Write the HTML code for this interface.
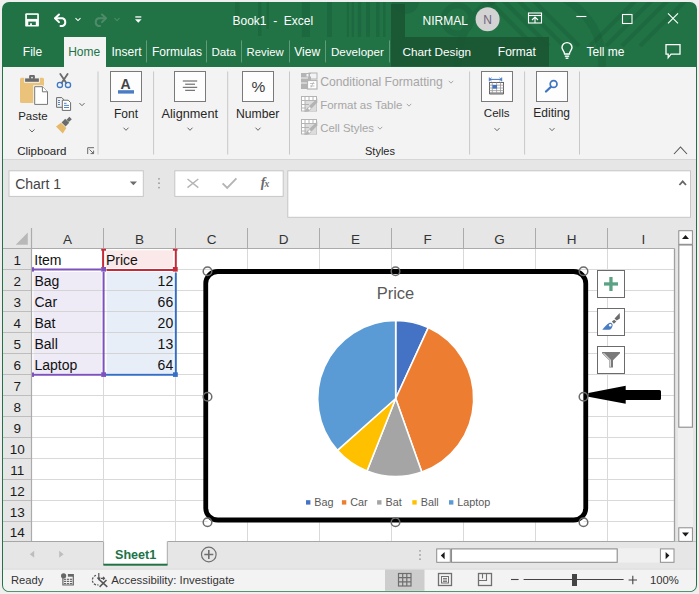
<!DOCTYPE html>
<html><head><meta charset="utf-8"><style>
html,body{margin:0;padding:0;}
body{width:699px;height:594px;overflow:hidden;background:#efefef;position:relative;font-family:"Liberation Sans", sans-serif;}
svg{position:absolute;left:0;top:0;}
</style></head><body>
<svg width="699" height="594" viewBox="0 0 699 594" font-family='"Liberation Sans", sans-serif'>
<rect x="2" y="2" width="695" height="590" fill="#217346" rx="7"/>
<defs><clipPath id="tb"><rect x="2" y="2" width="695" height="65" rx="7"/></clipPath></defs>
<g clip-path="url(#tb)">
<g opacity="0.13" fill="#082e18"><rect x="235" y="2" width="4.5" height="25"/><rect x="258" y="2" width="3.5" height="34"/><rect x="266.5" y="2" width="2.5" height="27"/><rect x="301.7" y="2" width="8.3" height="35"/><rect x="327" y="2" width="5" height="35"/><rect x="346.7" y="2" width="2.3" height="35"/><rect x="351.6" y="2" width="2.4" height="35"/><rect x="357.7" y="2" width="3.6" height="35"/><rect x="366" y="2" width="4" height="35"/><rect x="376" y="2" width="3.6" height="35"/><rect x="383" y="2" width="2.6" height="35"/></g>
<g opacity="0.12" fill="none" stroke="#082e18"><circle cx="457.5" cy="19.5" r="14" stroke-width="6"/><circle cx="530" cy="62" r="72" stroke-width="8"/><circle cx="405.7" cy="0" r="14" stroke-width="0" fill="#082e18"/></g>
<g opacity="0.12" stroke="#082e18" stroke-width="4.5"><line x1="636" y1="0" x2="590" y2="46"/><line x1="652" y1="0" x2="606" y2="46"/><line x1="668" y1="0" x2="622" y2="46"/><line x1="686" y1="0" x2="640" y2="46"/><line x1="488" y1="0" x2="534" y2="46"/><line x1="503" y1="0" x2="549" y2="46"/><line x1="518" y1="0" x2="564" y2="46"/><line x1="533" y1="0" x2="579" y2="46"/></g>
</g>
<path d="M391 4 H405 V37 H549 V66.6 H391 Z" fill="#1a5733" opacity="0.92"/>
<rect x="3" y="67" width="693" height="92" fill="#f3f3f3" />
<rect x="3" y="159" width="693" height="1" fill="#d6d6d6" />
<rect x="3" y="160" width="693" height="89" fill="#e6e6e6" />
<rect x="32" y="249" width="642.5" height="292.5" fill="#ffffff" />
<rect x="3" y="249" width="28.5" height="292.5" fill="#e6e6e6" />
<rect x="674.5" y="228" width="21.5" height="313.5" fill="#e6e6e6" />
<rect x="3" y="541.5" width="693" height="27.5" fill="#e6e6e6" />
<path d="M3 569 H696 V585.3 A6 6 0 0 1 690 591.3 H9 A6 6 0 0 1 3 585.3 Z" fill="#f3f3f3"/>
<rect x="25.2" y="13.2" width="13.7" height="13.4" rx="1.2" fill="#fff"/><rect x="26.9" y="14.9" width="10.3" height="4" fill="#217346"/><rect x="28.3" y="21.6" width="7.5" height="3.4" fill="#217346"/><rect x="30.1" y="23.3" width="1.8" height="1.8" fill="#fff"/>
<g fill="none" stroke="#fff" stroke-width="2" stroke-linecap="round" stroke-linejoin="round"><path d="M55.5 18.3 H62.6 A4.1 4.1 0 0 1 62.6 26 H60.5"/><path d="M59 14.5 L55 18.3 L59 22.1"/></g><path d="M75.5 18.2 L78 20.6 L80.5 18.2" fill="none" stroke="#fff" stroke-width="1.1"/>
<g fill="none" stroke="#4f8b6a" stroke-width="2" stroke-linecap="round" stroke-linejoin="round"><path d="M105.5 18.3 H98.4 A4.1 4.1 0 0 0 98.4 26 H100"/><path d="M102 14.5 L106 18.3 L102 22.1"/></g><path d="M114.5 18.2 L117 20.6 L119.5 18.2" fill="none" stroke="#4f8b6a" stroke-width="1.1"/>
<rect x="135.3" y="16.3" width="6" height="1.3" fill="#fff"/><path d="M135 19.2 H141.6 L138.3 22.8 Z" fill="#fff"/>
<text x="232.50" y="25.00" font-size="12" fill="#ffffff" font-weight="400" >Book1  -  Excel</text>
<text x="422.60" y="25.00" font-size="12" fill="#ffffff" font-weight="400" >NIRMAL</text>
<circle cx="487.6" cy="19.3" r="12" fill="#d3d3d3"/>
<text x="483.20" y="24.00" font-size="12" fill="#6e6480" font-weight="400" >N</text>
<g fill="none" stroke="#fff" stroke-width="1.1"><rect x="528.5" y="13" width="13" height="10"/><line x1="528.5" y1="15.5" x2="541.5" y2="15.5"/><path d="M532 20 L535 17 L538 20 M535 17 V23"/></g>
<g stroke="#fff" stroke-width="1.1" fill="none"><line x1="576.3" y1="16.5" x2="586.4" y2="16.5"/><rect x="622.5" y="14.5" width="9.5" height="9"/><path d="M668 13.3 L678 23.3 M678 13.3 L668 23.3"/></g>
<rect x="64" y="37" width="42" height="30" fill="#f3f3f3" />
<text x="22.80" y="55.80" font-size="12" fill="#ffffff" font-weight="400" >File</text>
<text x="68.20" y="55.80" font-size="12" fill="#217346" font-weight="400" >Home</text>
<text x="111.50" y="55.80" font-size="12" fill="#ffffff" font-weight="400" >Insert</text>
<text x="152.00" y="55.80" font-size="12" fill="#ffffff" font-weight="400" >Formulas</text>
<text x="211.50" y="55.80" font-size="11.6" fill="#ffffff" font-weight="400" >Data</text>
<text x="246.60" y="55.80" font-size="11.3" fill="#ffffff" font-weight="400" >Review</text>
<text x="294.30" y="55.80" font-size="12" fill="#ffffff" font-weight="400" >View</text>
<text x="331.00" y="55.80" font-size="11.6" fill="#ffffff" font-weight="400" >Developer</text>
<text x="402.50" y="55.80" font-size="11.75" fill="#ffffff" font-weight="400" >Chart Design</text>
<text x="497.80" y="55.80" font-size="12" fill="#ffffff" font-weight="400" >Format</text>
<text x="586.50" y="55.80" font-size="12" fill="#ffffff" font-weight="400" >Tell me</text>
<rect x="146" y="40.4" width="1" height="22" fill="#5f9c7a"/>
<rect x="206" y="40.4" width="1" height="22" fill="#5f9c7a"/>
<rect x="241" y="40.4" width="1" height="22" fill="#5f9c7a"/>
<rect x="289" y="40.4" width="1" height="22" fill="#5f9c7a"/>
<rect x="325" y="40.4" width="1" height="22" fill="#5f9c7a"/>
<rect x="389" y="40.4" width="1" height="22" fill="#5f9c7a"/>
<g fill="none" stroke="#fff" stroke-width="1.4"><path d="M564.6 54 C564.6 51.2 562 50 562 47.6 A5 5 0 0 1 572 47.6 C572 50 569.4 51.2 569.4 54 Z"/><line x1="564.8" y1="56.2" x2="569.2" y2="56.2"/><line x1="565.6" y1="58.2" x2="568.4" y2="58.2"/></g>
<path d="M666 44.6 H680 V54.2 H671 L668.2 57.6 V54.2 H666 Z" fill="none" stroke="#fff" stroke-width="1.3" stroke-linejoin="miter"/>
<rect x="97.5" y="71.5" width="1" height="83" fill="#c8c8c8" />
<rect x="153.1" y="71.5" width="1" height="83" fill="#c8c8c8" />
<rect x="227.2" y="71.5" width="1" height="83" fill="#c8c8c8" />
<rect x="289.0" y="71.5" width="1" height="83" fill="#c8c8c8" />
<rect x="469.1" y="71.5" width="1" height="83" fill="#c8c8c8" />
<rect x="524.1" y="71.5" width="1" height="83" fill="#c8c8c8" />
<rect x="579.0" y="71.5" width="1" height="83" fill="#c8c8c8" />
<rect x="20" y="77.7" width="24" height="25.3" rx="1.5" fill="#eac27a"/><path d="M24.2 77.2 H39.8 V82.8 H24.2 Z" fill="#f3f3f3"/><path d="M25.1 78.4 H38.9 V81.8 H25.1 Z" fill="#6a6a6a"/><rect x="29.1" y="75" width="5.8" height="4" rx="1" fill="#6a6a6a"/><circle cx="32" cy="77.6" r="0.9" fill="#f3f3f3"/><path d="M33.2 85.2 H43 L49 91.2 V106 H33.2 Z" fill="#f3f3f3"/><path d="M34.7 86.7 H42.4 L47.5 91.8 V104.4 H34.7 Z" fill="#fff" stroke="#777" stroke-width="1"/><path d="M42.4 86.7 V91.8 H47.5" fill="#fff" stroke="#777" stroke-width="1"/>
<text x="18.20" y="120.00" font-size="11.5" fill="#262626" font-weight="400" >Paste</text>
<path d="M29.50 129.40 L32.00 132.00 L34.50 129.40" fill="none" stroke="#666" stroke-width="1"/>
<g fill="none" stroke="#6b6b6b" stroke-width="1.8" stroke-linecap="round"><path d="M60.3 74 L66.3 83"/><path d="M67.6 74 L61.6 83"/></g><g fill="none" stroke="#3e78c2" stroke-width="1.3"><circle cx="59.9" cy="84.9" r="2.6"/><circle cx="68" cy="84.9" r="2.6"/></g>
<path d="M56.6 97.6 H61.8 L63.5 99.3 V107.3 H56.6 Z" fill="#f3f3f3" stroke="#6b6b6b" stroke-width="1"/><g stroke="#3e78c2" stroke-width="0.9"><line x1="58" y1="100.5" x2="60" y2="100.5"/><line x1="58" y1="102.5" x2="60" y2="102.5"/><line x1="58" y1="104.5" x2="60" y2="104.5"/></g><path d="M62.3 100.2 H68.2 L70.6 102.6 V110.4 H62.3 Z" fill="#fff" stroke="#6b6b6b" stroke-width="1"/><g stroke="#3e78c2" stroke-width="0.9"><line x1="64" y1="103.3" x2="66.5" y2="103.3"/><line x1="64" y1="105.4" x2="69" y2="105.4"/><line x1="64" y1="107.5" x2="69" y2="107.5"/></g>
<path d="M79.50 103.10 L82.00 105.70 L84.50 103.10" fill="none" stroke="#666" stroke-width="1"/>
<path d="M56 126.6 L61 122.8 L66.3 128.1 L62.8 133.4 Z" fill="#e6b86a"/><path d="M61.6 122.4 L65.2 118.8 L69.2 122.8 L65.6 126.4 Z" fill="#6b6b6b"/><path d="M66.5 119.7 L69.4 116.8 L71.8 119.2 L68.9 122.1 Z" fill="#6b6b6b"/>
<text x="17.20" y="154.70" font-size="11.5" fill="#262626" font-weight="400" >Clipboard</text>
<g fill="none" stroke="#6b6b6b" stroke-width="1"><path d="M87.7 154 V147.7 H94 "/><path d="M89.5 149.5 L93.6 153.6 M93.6 150.6 V153.6 H90.6"/></g>
<rect x="110.5" y="71.5" width="31" height="30" fill="#fdfdfd" stroke="#7a7a7a" stroke-width="1"/>
<text x="120.60" y="88.60" font-size="14" fill="#444" font-weight="700" >A</text>
<rect x="118" y="90.2" width="16" height="3.4" fill="#4a7cc4" />
<text x="114.00" y="117.70" font-size="12" fill="#262626" font-weight="400" >Font</text>
<path d="M123.50 127.70 L126.00 130.30 L128.50 127.70" fill="none" stroke="#666" stroke-width="1"/>
<rect x="174.5" y="71.5" width="31" height="30" fill="#fdfdfd" stroke="#7a7a7a" stroke-width="1"/>
<g stroke="#555" stroke-width="1"><line x1="182.8" y1="81" x2="197.2" y2="81"/><line x1="185.2" y1="84.2" x2="195" y2="84.2"/><line x1="182.8" y1="87.3" x2="197.2" y2="87.3"/><line x1="185.2" y1="90.3" x2="195" y2="90.3"/></g>
<text x="161.60" y="118.00" font-size="12.7" fill="#262626" font-weight="400" >Alignment</text>
<path d="M187.50 127.70 L190.00 130.30 L192.50 127.70" fill="none" stroke="#666" stroke-width="1"/>
<rect x="242.5" y="71.5" width="31" height="30" fill="#fdfdfd" stroke="#7a7a7a" stroke-width="1"/>
<text x="251.60" y="92.40" font-size="15.5" fill="#3a3a3a" font-weight="400" >%</text>
<text x="236.00" y="118.00" font-size="12.2" fill="#262626" font-weight="400" >Number</text>
<path d="M255.50 127.70 L258.00 130.30 L260.50 127.70" fill="none" stroke="#666" stroke-width="1"/>
<text x="320.20" y="85.60" font-size="12.2" fill="#a6a6a6" font-weight="400" >Conditional Formatting</text>
<path d="M448.75 80.85 L451.00 83.15 L453.25 80.85" fill="none" stroke="#a6a6a6" stroke-width="1"/>
<text x="320.20" y="108.80" font-size="11.5" fill="#a6a6a6" font-weight="400" >Format as Table</text>
<path d="M406.75 103.85 L409.00 106.15 L411.25 103.85" fill="none" stroke="#a6a6a6" stroke-width="1"/>
<text x="320.20" y="131.70" font-size="11.4" fill="#a6a6a6" font-weight="400" >Cell Styles</text>
<path d="M377.75 126.85 L380.00 129.15 L382.25 126.85" fill="none" stroke="#a6a6a6" stroke-width="1"/>
<text x="365.00" y="154.80" font-size="11" fill="#262626" font-weight="400" >Styles</text>
<g fill="#b4b4b4"><rect x="301" y="73" width="10" height="16"/></g><g fill="#f3f3f3"><rect x="306.5" y="74" width="2.5" height="2.5"/><rect x="310" y="74" width="2.5" height="2.5"/><rect x="313.5" y="74" width="2.5" height="2.5"/></g><rect x="309" y="73" width="8" height="6" fill="none" stroke="#b4b4b4" stroke-width="1"/><line x1="301" y1="78" x2="308" y2="78" stroke="#f3f3f3" stroke-width="1"/><line x1="301" y1="83" x2="308" y2="83" stroke="#f3f3f3" stroke-width="1"/><rect x="307.5" y="80.5" width="9.5" height="8.5" fill="#fff" stroke="#b4b4b4" stroke-width="1.2"/><path d="M310 83.5 H314.5 M310 86 H314.5 M313.5 82 L311 87.5" stroke="#b4b4b4" stroke-width="0.8"/>
<rect x="301.5" y="96.5" width="15" height="14.5" fill="#fff" stroke="#b4b4b4" stroke-width="1"/><rect x="305" y="100" width="11.5" height="10.5" fill="#dcdcdc"/><g stroke="#b4b4b4" stroke-width="1"><line x1="301" y1="100.5" x2="317" y2="100.5"/><line x1="301" y1="104.5" x2="309" y2="104.5"/><line x1="301" y1="108" x2="306" y2="108"/><line x1="305" y1="96" x2="305" y2="111"/><line x1="309" y1="96" x2="309" y2="101"/><line x1="313" y1="96" x2="313" y2="101"/></g><path d="M317.3 98.5 V102.5 L311.5 108.5 L309 106 Z" fill="#b4b4b4"/><path d="M308.3 106.7 L311 109.3 L308.5 111.6 L304 112 Z" fill="#b4b4b4"/><circle cx="309.3" cy="108.6" r="1.1" fill="#fff"/>
<rect x="301.5" y="119.5" width="15" height="14.5" fill="#fff" stroke="#b4b4b4" stroke-width="1"/><rect x="305" y="123" width="11.5" height="10.5" fill="#dcdcdc"/><g stroke="#b4b4b4" stroke-width="1"><line x1="301" y1="123.5" x2="317" y2="123.5"/><line x1="301" y1="127.5" x2="309" y2="127.5"/><line x1="301" y1="131" x2="306" y2="131"/><line x1="305" y1="119" x2="305" y2="134"/><line x1="309" y1="119" x2="309" y2="124"/><line x1="313" y1="119" x2="313" y2="124"/></g><path d="M317.3 121.5 V125.5 L311.5 131.5 L309 129 Z" fill="#b4b4b4"/><path d="M308.3 129.7 L311 132.3 L308.5 134.6 L304 135 Z" fill="#b4b4b4"/><circle cx="309.3" cy="131.6" r="1.1" fill="#fff"/>
<rect x="481.5" y="71.5" width="31" height="30" fill="#fdfdfd" stroke="#7a7a7a" stroke-width="1"/>
<g stroke="#3f74c0" stroke-width="1"><line x1="489.5" y1="79.4" x2="501.5" y2="79.4"/><line x1="489.3" y1="77.5" x2="489.3" y2="81.3"/><line x1="501.7" y1="77.5" x2="501.7" y2="81.3"/></g><path d="M491.5 77.8 L489.8 79.4 L491.5 81 M499.5 77.8 L501.2 79.4 L499.5 81" fill="none" stroke="#3f74c0" stroke-width="0.9"/><rect x="489.5" y="82.5" width="14" height="10.5" fill="#fff" stroke="#666" stroke-width="1"/><g stroke="#999" stroke-width="0.8"><line x1="489.5" y1="85.2" x2="503.5" y2="85.2"/><line x1="489.5" y1="88" x2="503.5" y2="88"/><line x1="489.5" y1="90.6" x2="503.5" y2="90.6"/><line x1="492.3" y1="82.5" x2="492.3" y2="93"/><line x1="496.6" y1="82.5" x2="496.6" y2="93"/><line x1="500.5" y1="82.5" x2="500.5" y2="93"/></g><rect x="492.5" y="85" width="4.5" height="3.6" fill="#3f74c0"/><path d="M489.5 93 V94 H503.5 V93" fill="none" stroke="#666" stroke-width="1"/>
<text x="483.80" y="117.40" font-size="11.6" fill="#262626" font-weight="400" >Cells</text>
<path d="M494.50 128.10 L497.00 130.70 L499.50 128.10" fill="none" stroke="#666" stroke-width="1"/>
<rect x="536.5" y="71.5" width="31" height="30" fill="#fdfdfd" stroke="#7a7a7a" stroke-width="1"/>
<circle cx="553.6" cy="84" r="3.4" fill="none" stroke="#3f74c0" stroke-width="1.7"/><line x1="550.8" y1="87" x2="546" y2="91.5" stroke="#3f74c0" stroke-width="2.3" stroke-linecap="round"/>
<text x="533.30" y="117.40" font-size="12" fill="#262626" font-weight="400" >Editing</text>
<path d="M549.50 128.10 L552.00 130.70 L554.50 128.10" fill="none" stroke="#666" stroke-width="1"/>
<path d="M674 154 L680.5 147 L687 154" fill="none" stroke="#555" stroke-width="1.1"/>
<rect x="9" y="170.8" width="134.3" height="25.6" fill="#fff" stroke="#c6c6c6" stroke-width="1"/>
<text x="15.20" y="188.70" font-size="14" fill="#444" font-weight="400" >Chart 1</text>
<path d="M129.8 181.6 H137 L133.4 185.2 Z" fill="#6d6d6d"/>
<g fill="#9a9a9a"><circle cx="159" cy="178.8" r="0.9"/><circle cx="159" cy="183.2" r="0.9"/><circle cx="159" cy="187.6" r="0.9"/></g>
<rect x="174.8" y="170.8" width="108.4" height="25.6" fill="#fff" stroke="#c6c6c6" stroke-width="1"/>
<path d="M187.5 179 L198.3 187.6 M198.3 179 L187.5 187.6" stroke="#b4b4b4" stroke-width="1.4" fill="none"/>
<path d="M222.6 183.4 L227.2 188 L236.4 178.4" stroke="#b4b4b4" stroke-width="1.9" fill="none"/>
<text x="260.80" y="186.50" font-size="14" fill="#6a6a6a" font-weight="700" font-family="Liberation Serif" font-style="italic">f</text>
<text x="264.60" y="187.00" font-size="9.5" fill="#6a6a6a" font-weight="700" font-family="Liberation Serif" font-style="italic">x</text>
<rect x="287.8" y="170.8" width="402.7" height="46.5" fill="#fff" stroke="#c6c6c6" stroke-width="1"/>
<path d="M679.4 185 L682.7 181.4 L686 185" fill="none" stroke="#666" stroke-width="1.8"/>
<line x1="31.5" y1="269.50" x2="674.5" y2="269.50" stroke="#d9d9d9" stroke-width="1"/>
<line x1="31.5" y1="290.50" x2="674.5" y2="290.50" stroke="#d9d9d9" stroke-width="1"/>
<line x1="31.5" y1="311.50" x2="674.5" y2="311.50" stroke="#d9d9d9" stroke-width="1"/>
<line x1="31.5" y1="332.50" x2="674.5" y2="332.50" stroke="#d9d9d9" stroke-width="1"/>
<line x1="31.5" y1="353.50" x2="674.5" y2="353.50" stroke="#d9d9d9" stroke-width="1"/>
<line x1="31.5" y1="374.50" x2="674.5" y2="374.50" stroke="#d9d9d9" stroke-width="1"/>
<line x1="31.5" y1="395.50" x2="674.5" y2="395.50" stroke="#d9d9d9" stroke-width="1"/>
<line x1="31.5" y1="416.50" x2="674.5" y2="416.50" stroke="#d9d9d9" stroke-width="1"/>
<line x1="31.5" y1="437.50" x2="674.5" y2="437.50" stroke="#d9d9d9" stroke-width="1"/>
<line x1="31.5" y1="458.50" x2="674.5" y2="458.50" stroke="#d9d9d9" stroke-width="1"/>
<line x1="31.5" y1="479.50" x2="674.5" y2="479.50" stroke="#d9d9d9" stroke-width="1"/>
<line x1="31.5" y1="500.50" x2="674.5" y2="500.50" stroke="#d9d9d9" stroke-width="1"/>
<line x1="31.5" y1="521.50" x2="674.5" y2="521.50" stroke="#d9d9d9" stroke-width="1"/>
<line x1="103.5" y1="249" x2="103.5" y2="541.5" stroke="#d9d9d9" stroke-width="1"/>
<line x1="175.5" y1="249" x2="175.5" y2="541.5" stroke="#d9d9d9" stroke-width="1"/>
<line x1="247.5" y1="249" x2="247.5" y2="541.5" stroke="#d9d9d9" stroke-width="1"/>
<line x1="319.5" y1="249" x2="319.5" y2="541.5" stroke="#d9d9d9" stroke-width="1"/>
<line x1="391.5" y1="249" x2="391.5" y2="541.5" stroke="#d9d9d9" stroke-width="1"/>
<line x1="463.5" y1="249" x2="463.5" y2="541.5" stroke="#d9d9d9" stroke-width="1"/>
<line x1="535.5" y1="249" x2="535.5" y2="541.5" stroke="#d9d9d9" stroke-width="1"/>
<line x1="607.5" y1="249" x2="607.5" y2="541.5" stroke="#d9d9d9" stroke-width="1"/>
<line x1="31.5" y1="228" x2="31.5" y2="248.5" stroke="#ababab" stroke-width="1"/>
<line x1="103.5" y1="228" x2="103.5" y2="248.5" stroke="#ababab" stroke-width="1"/>
<line x1="175.5" y1="228" x2="175.5" y2="248.5" stroke="#ababab" stroke-width="1"/>
<line x1="247.5" y1="228" x2="247.5" y2="248.5" stroke="#ababab" stroke-width="1"/>
<line x1="319.5" y1="228" x2="319.5" y2="248.5" stroke="#ababab" stroke-width="1"/>
<line x1="391.5" y1="228" x2="391.5" y2="248.5" stroke="#ababab" stroke-width="1"/>
<line x1="463.5" y1="228" x2="463.5" y2="248.5" stroke="#ababab" stroke-width="1"/>
<line x1="535.5" y1="228" x2="535.5" y2="248.5" stroke="#ababab" stroke-width="1"/>
<line x1="607.5" y1="228" x2="607.5" y2="248.5" stroke="#ababab" stroke-width="1"/>
<line x1="3" y1="248.5" x2="674.5" y2="248.5" stroke="#ababab" stroke-width="1.2"/>
<line x1="3" y1="269.50" x2="31.5" y2="269.50" stroke="#bdbdbd" stroke-width="1"/>
<line x1="3" y1="290.50" x2="31.5" y2="290.50" stroke="#bdbdbd" stroke-width="1"/>
<line x1="3" y1="311.50" x2="31.5" y2="311.50" stroke="#bdbdbd" stroke-width="1"/>
<line x1="3" y1="332.50" x2="31.5" y2="332.50" stroke="#bdbdbd" stroke-width="1"/>
<line x1="3" y1="353.50" x2="31.5" y2="353.50" stroke="#bdbdbd" stroke-width="1"/>
<line x1="3" y1="374.50" x2="31.5" y2="374.50" stroke="#bdbdbd" stroke-width="1"/>
<line x1="3" y1="395.50" x2="31.5" y2="395.50" stroke="#bdbdbd" stroke-width="1"/>
<line x1="3" y1="416.50" x2="31.5" y2="416.50" stroke="#bdbdbd" stroke-width="1"/>
<line x1="3" y1="437.50" x2="31.5" y2="437.50" stroke="#bdbdbd" stroke-width="1"/>
<line x1="3" y1="458.50" x2="31.5" y2="458.50" stroke="#bdbdbd" stroke-width="1"/>
<line x1="3" y1="479.50" x2="31.5" y2="479.50" stroke="#bdbdbd" stroke-width="1"/>
<line x1="3" y1="500.50" x2="31.5" y2="500.50" stroke="#bdbdbd" stroke-width="1"/>
<line x1="3" y1="521.50" x2="31.5" y2="521.50" stroke="#bdbdbd" stroke-width="1"/>
<line x1="31.5" y1="228" x2="31.5" y2="541.5" stroke="#ababab" stroke-width="1.2"/>
<line x1="674.5" y1="248.5" x2="674.5" y2="541.5" stroke="#a0a0a0" stroke-width="1.3"/>
<line x1="3" y1="541.5" x2="674.5" y2="541.5" stroke="#a6a6a6" stroke-width="1"/>
<path d="M27.8 232.6 V244.7 H15.7 Z" fill="#b8b8b8"/>
<text x="67.5" y="243.9" font-size="13.5" fill="#333" text-anchor="middle">A</text>
<text x="139.5" y="243.9" font-size="13.5" fill="#333" text-anchor="middle">B</text>
<text x="211.5" y="243.9" font-size="13.5" fill="#333" text-anchor="middle">C</text>
<text x="283.5" y="243.9" font-size="13.5" fill="#333" text-anchor="middle">D</text>
<text x="355.5" y="243.9" font-size="13.5" fill="#333" text-anchor="middle">E</text>
<text x="427.5" y="243.9" font-size="13.5" fill="#333" text-anchor="middle">F</text>
<text x="499.5" y="243.9" font-size="13.5" fill="#333" text-anchor="middle">G</text>
<text x="571.5" y="243.9" font-size="13.5" fill="#333" text-anchor="middle">H</text>
<text x="643.5" y="243.9" font-size="13.5" fill="#333" text-anchor="middle">I</text>
<text x="17.2" y="264.50" font-size="13.5" fill="#1a1a1a" text-anchor="middle">1</text>
<text x="17.2" y="285.50" font-size="13.5" fill="#1a1a1a" text-anchor="middle">2</text>
<text x="17.2" y="306.50" font-size="13.5" fill="#1a1a1a" text-anchor="middle">3</text>
<text x="17.2" y="327.50" font-size="13.5" fill="#1a1a1a" text-anchor="middle">4</text>
<text x="17.2" y="348.50" font-size="13.5" fill="#1a1a1a" text-anchor="middle">5</text>
<text x="17.2" y="369.50" font-size="13.5" fill="#1a1a1a" text-anchor="middle">6</text>
<text x="17.2" y="390.50" font-size="13.5" fill="#1a1a1a" text-anchor="middle">7</text>
<text x="17.2" y="411.50" font-size="13.5" fill="#1a1a1a" text-anchor="middle">8</text>
<text x="17.2" y="432.50" font-size="13.5" fill="#1a1a1a" text-anchor="middle">9</text>
<text x="17.2" y="453.50" font-size="13.5" fill="#1a1a1a" text-anchor="middle">10</text>
<text x="17.2" y="474.50" font-size="13.5" fill="#1a1a1a" text-anchor="middle">11</text>
<text x="17.2" y="495.50" font-size="13.5" fill="#1a1a1a" text-anchor="middle">12</text>
<text x="17.2" y="516.50" font-size="13.5" fill="#1a1a1a" text-anchor="middle">13</text>
<text x="17.2" y="537.00" font-size="13.5" fill="#1a1a1a" text-anchor="middle">14</text>
<rect x="106" y="250.3" width="67" height="17.6" fill="#fbe8e8" />
<rect x="33.5" y="272" width="68" height="101" fill="#eeeaf6" />
<rect x="106.5" y="272" width="67" height="101" fill="#e8eef8" />
<line x1="33.5" y1="290.50" x2="101.5" y2="290.50" stroke="#d4d4d4" stroke-width="1"/>
<line x1="106.5" y1="290.50" x2="173.5" y2="290.50" stroke="#d4d4d4" stroke-width="1"/>
<line x1="33.5" y1="311.50" x2="101.5" y2="311.50" stroke="#d4d4d4" stroke-width="1"/>
<line x1="106.5" y1="311.50" x2="173.5" y2="311.50" stroke="#d4d4d4" stroke-width="1"/>
<line x1="33.5" y1="332.50" x2="101.5" y2="332.50" stroke="#d4d4d4" stroke-width="1"/>
<line x1="106.5" y1="332.50" x2="173.5" y2="332.50" stroke="#d4d4d4" stroke-width="1"/>
<line x1="33.5" y1="353.50" x2="101.5" y2="353.50" stroke="#d4d4d4" stroke-width="1"/>
<line x1="106.5" y1="353.50" x2="173.5" y2="353.50" stroke="#d4d4d4" stroke-width="1"/>
<g fill="none" stroke="#7d52bd" stroke-width="2"><line x1="33" y1="269.6" x2="101.5" y2="269.6"/><line x1="33" y1="374.8" x2="101.5" y2="374.8"/><line x1="103.6" y1="272" x2="103.6" y2="373"/></g>
<g fill="none" stroke="#346ec6" stroke-width="2"><line x1="106" y1="374.8" x2="173.5" y2="374.8"/><line x1="175.8" y1="272.5" x2="175.8" y2="373"/></g>
<g fill="none" stroke="#c62a38" stroke-width="2"><line x1="103.1" y1="250" x2="103.1" y2="267.5"/><line x1="175.8" y1="250" x2="175.8" y2="267.5"/><line x1="106.5" y1="270" x2="173" y2="270"/></g>
<rect x="101.2" y="248.8" width="4.8" height="1.9" fill="#c62a38"/><rect x="172.9" y="248.8" width="4.6" height="1.9" fill="#c62a38"/><rect x="172.9" y="267" width="4.8" height="4.6" fill="#c62a38"/><rect x="101.2" y="267" width="4.8" height="4.6" fill="#7d52bd"/><rect x="32" y="267.2" width="2" height="4.4" fill="#7d52bd"/><rect x="101.2" y="372.3" width="4.8" height="4.6" fill="#7d52bd"/><rect x="32" y="372.5" width="2" height="4.4" fill="#7d52bd"/><rect x="173" y="372.3" width="4.8" height="4.6" fill="#346ec6"/>
<text x="34.30" y="264.50" font-size="14" fill="#111" font-weight="400" >Item</text>
<text x="106.00" y="264.50" font-size="14" fill="#111" font-weight="400" >Price</text>
<text x="34.50" y="285.50" font-size="14" fill="#111" font-weight="400" >Bag</text>
<text x="173.2" y="285.50" font-size="14" fill="#111" text-anchor="end">12</text>
<text x="34.50" y="306.50" font-size="14" fill="#111" font-weight="400" >Car</text>
<text x="173.2" y="306.50" font-size="14" fill="#111" text-anchor="end">66</text>
<text x="34.50" y="327.50" font-size="14" fill="#111" font-weight="400" >Bat</text>
<text x="173.2" y="327.50" font-size="14" fill="#111" text-anchor="end">20</text>
<text x="34.50" y="348.50" font-size="14" fill="#111" font-weight="400" >Ball</text>
<text x="173.2" y="348.50" font-size="14" fill="#111" text-anchor="end">13</text>
<text x="34.50" y="369.50" font-size="14" fill="#111" font-weight="400" >Laptop</text>
<text x="173.2" y="369.50" font-size="14" fill="#111" text-anchor="end">64</text>
<rect x="207.5" y="271.3" width="376.0" height="250.90000000000003" fill="#ffffff" />
<text x="395.5" y="298.8" font-size="16.5" fill="#595959" text-anchor="middle">Price</text>
<path d="M395.7 398.5 L395.700 320.500 A78 78 0 0 1 428.276 327.628 Z" fill="#4472c4" stroke="#fff" stroke-width="1.6" stroke-linejoin="round"/>
<path d="M395.7 398.5 L428.276 327.628 A78 78 0 0 1 421.792 472.007 Z" fill="#ed7d31" stroke="#fff" stroke-width="1.6" stroke-linejoin="round"/>
<path d="M395.7 398.5 L421.792 472.007 A78 78 0 0 1 366.986 471.023 Z" fill="#a5a5a5" stroke="#fff" stroke-width="1.6" stroke-linejoin="round"/>
<path d="M395.7 398.5 L366.986 471.023 A78 78 0 0 1 337.423 450.344 Z" fill="#ffc000" stroke="#fff" stroke-width="1.6" stroke-linejoin="round"/>
<path d="M395.7 398.5 L337.423 450.344 A78 78 0 0 1 395.700 320.500 Z" fill="#5b9bd5" stroke="#fff" stroke-width="1.6" stroke-linejoin="round"/>
<rect x="306" y="500.2" width="4.4" height="4.4" fill="#4472c4" />
<text x="314.20" y="505.80" font-size="10.8" fill="#595959" font-weight="400" >Bag</text>
<rect x="341.9" y="500.2" width="4.4" height="4.4" fill="#ed7d31" />
<text x="350.30" y="505.80" font-size="10.8" fill="#595959" font-weight="400" >Car</text>
<rect x="377.1" y="500.2" width="4.4" height="4.4" fill="#a5a5a5" />
<text x="385.50" y="505.80" font-size="10.8" fill="#595959" font-weight="400" >Bat</text>
<rect x="412.3" y="500.2" width="4.4" height="4.4" fill="#ffc000" />
<text x="420.70" y="505.80" font-size="10.8" fill="#595959" font-weight="400" >Ball</text>
<rect x="449" y="500.2" width="4.4" height="4.4" fill="#5b9bd5" />
<text x="457.30" y="505.80" font-size="10.8" fill="#595959" font-weight="400" >Laptop</text>
<rect x="205.75" y="271.5" width="380" height="248.5" rx="12" ry="12" fill="none" stroke="#000" stroke-width="4.8"/>
<circle cx="207.5" cy="271.3" r="4.3" fill="none" stroke="#6b6b6b" stroke-width="1.5"/>
<circle cx="395.5" cy="271.3" r="4.3" fill="none" stroke="#6b6b6b" stroke-width="1.5"/>
<circle cx="583.5" cy="271.3" r="4.3" fill="none" stroke="#6b6b6b" stroke-width="1.5"/>
<circle cx="207.5" cy="396.7" r="4.3" fill="none" stroke="#6b6b6b" stroke-width="1.5"/>
<circle cx="583.5" cy="396.7" r="4.3" fill="none" stroke="#6b6b6b" stroke-width="1.5"/>
<circle cx="207.5" cy="522.2" r="4.3" fill="none" stroke="#6b6b6b" stroke-width="1.5"/>
<circle cx="395.5" cy="522.2" r="4.3" fill="none" stroke="#6b6b6b" stroke-width="1.5"/>
<circle cx="583.5" cy="522.2" r="4.3" fill="none" stroke="#6b6b6b" stroke-width="1.5"/>
<path d="M588.4 393 L625.7 385.8 V390 H659.5 Q661 390 661 391.5 V398.5 Q661 400 659.5 400 H625.7 V403.8 L588.4 396.7 Z" fill="#000"/>
<rect x="597.5" y="270.5" width="27" height="27" fill="#fff" stroke="#6b6b6b" stroke-width="1"/>
<rect x="597.5" y="308.5" width="27" height="27" fill="#fff" stroke="#6b6b6b" stroke-width="1"/>
<rect x="597.5" y="346.5" width="27" height="27" fill="#fff" stroke="#6b6b6b" stroke-width="1"/>
<g fill="#5aa283"><rect x="604" y="282.3" width="14" height="3.3"/><rect x="609.3" y="277" width="3.3" height="14"/></g>
<path d="M619.7 313 L619.9 318.5 L616.6 320.6 L614.5 318.6 Z" fill="#6b6b6b"/><path d="M611.9 321.6 L614.2 319.8 L616.3 321.6 L613.9 323.7 Z" fill="#6b6b6b"/><path d="M602.3 329.7 C604.5 327.5 606.5 324.5 609.2 323.1 C611 322.3 612.8 323.6 612.6 325.4 C612.3 327.6 611 329.7 609 329.7 Z" fill="#4a7cc4"/><path d="M609.5 324.2 C610.5 323.6 611.8 324.2 611.6 325.4 C611.4 326.6 610 326.8 609.3 326.2 C608.6 325.6 608.8 324.6 609.5 324.2 Z" fill="#fff"/>
<path d="M602.1 352.1 H620 V353.3 L613 360.3 V367.6 H609.2 V360.3 L602.1 353.3 Z" fill="#7a7a7a"/><path d="M603.6 353.2 L610.2 359.8 V366.8" fill="none" stroke="#fff" stroke-width="1"/>
<rect x="678" y="244.5" width="15" height="297" fill="#f0f0f0" />
<rect x="678.8" y="230.7" width="13.6" height="13.6" fill="#fff" stroke="#8c8c8c" stroke-width="1"/>
<path d="M682 238.9 L685.5 235 L689 238.9 Z" fill="#1a1a1a"/>
<rect x="678.8" y="245" width="13.6" height="182.2" fill="#fff" stroke="#8c8c8c" stroke-width="1.1"/>
<rect x="678.8" y="527.8" width="13.6" height="13.6" fill="#fff" stroke="#8c8c8c" stroke-width="1"/>
<path d="M682 532.5 L685.5 536.4 L689 532.5 Z" fill="#1a1a1a"/>
<path d="M29.8 554.3 L34.2 550.8 V557.8 Z" fill="#bdbdbd"/>
<path d="M63.6 554.3 L59.2 550.8 V557.8 Z" fill="#bdbdbd"/>
<rect x="103.4" y="541" width="64.1" height="24" fill="#ffffff" />
<path d="M103.6 541.5 V565 M167.3 541.5 V565" stroke="#a8a8a8" stroke-width="1"/>
<rect x="103.4" y="563.7" width="64.1" height="2" fill="#217346" />
<text x="115.00" y="559.20" font-size="12.6" fill="#217346" font-weight="700" >Sheet1</text>
<circle cx="208.8" cy="554.5" r="7.3" fill="none" stroke="#707070" stroke-width="1.2"/><path d="M204.3 554.5 H213.3 M208.8 550 V559" stroke="#707070" stroke-width="1.6"/>
<g fill="#a0a0a0"><circle cx="420" cy="550.8" r="0.9"/><circle cx="420" cy="555" r="0.9"/><circle cx="420" cy="559.2" r="0.9"/></g>
<rect x="436" y="548.3" width="238.5" height="14.3" fill="#f0f0f0" />
<rect x="436.7" y="548.9" width="13.6" height="13.4" fill="#fff" stroke="#8c8c8c" stroke-width="1"/>
<path d="M444.6 551.9 L440.8 555.6 L444.6 559.3 Z" fill="#1a1a1a"/>
<rect x="451.5" y="548.9" width="165.7" height="13.4" fill="#fff" stroke="#8c8c8c" stroke-width="1.1"/>
<rect x="660.4" y="548.9" width="13.6" height="13.4" fill="#fff" stroke="#8c8c8c" stroke-width="1"/>
<path d="M665.6 551.9 L669.4 555.6 L665.6 559.3 Z" fill="#1a1a1a"/>
<line x1="3" y1="569.2" x2="696" y2="569.2" stroke="#d6d6d6" stroke-width="0.8"/>
<text x="11.00" y="584.40" font-size="11.2" fill="#333" font-weight="400" >Ready</text>
<g fill="#666"><circle cx="63.6" cy="575.8" r="2.6"/><rect x="67.9" y="574" width="6" height="2.7"/><rect x="64" y="578.7" width="2.2" height="1.2"/><rect x="64" y="580.8" width="2.2" height="1.2"/><rect x="64" y="583" width="2.2" height="1.2"/><rect x="67" y="578.7" width="2.2" height="1.2"/><rect x="67" y="580.8" width="2.2" height="1.2"/><rect x="67" y="583" width="2.2" height="1.2"/><rect x="70" y="578.7" width="2.2" height="1.2"/><rect x="70" y="580.8" width="2.2" height="1.2"/><rect x="70" y="583" width="2.2" height="1.2"/></g><path d="M62.9 577.5 V585 H73.3 V576" fill="none" stroke="#666" stroke-width="1.2"/>
<g fill="none" stroke="#555" stroke-width="1.2"><path d="M96 575.4 A4.8 4.8 0 1 0 98.5 584.8" stroke-dasharray="2.2 1.2"/><path d="M98.8 573 V579.3 M97.3 577.6 L98.8 579.3 L100.3 577.6"/><path d="M101 578.3 H104.5 M103 576.8 L104.5 578.3 L103 579.8"/><path d="M99 579.4 L107.3 586.9 M106.5 580 L99.6 586.9" stroke-width="1.5"/></g>
<text x="111.20" y="584.40" font-size="11.4" fill="#333" font-weight="400" >Accessibility: Investigate</text>
<rect x="385" y="569.5" width="39.5" height="21.3" fill="#cdcdcd" />
<g fill="none" stroke="#6e6e6e" stroke-width="1.2"><rect x="398.5" y="573.5" width="12.5" height="12.5"/><path d="M402.7 573.5 V586 M406.8 573.5 V586 M398.5 577.7 H411 M398.5 581.8 H411"/></g>
<g fill="none" stroke="#707070"><rect x="438.5" y="573.5" width="13" height="12" stroke-width="1.3"/><rect x="441.5" y="576.5" width="7" height="6.5" stroke-width="1"/><path d="M443 578.5 H447 M443 580 H447 M443 581.5 H447" stroke-width="0.9"/><rect x="478.5" y="573.5" width="13" height="12" stroke-width="1.3"/><path d="M478.5 580.5 H486.5 V573.5 M482.5 573.5 V578.5" stroke-width="1.1"/></g>
<path d="M511 579.5 H518.6" stroke="#444" stroke-width="1.1"/>
<path d="M523.6 579.5 H623.6" stroke="#444" stroke-width="1.2"/>
<rect x="572" y="574" width="5" height="12" fill="#444" />
<path d="M628.6 580 H637 M632.8 575.8 V584.2" stroke="#444" stroke-width="1.1"/>
<text x="650.00" y="584.40" font-size="11.3" fill="#333" font-weight="400" >100%</text>
</svg>
</body></html>
